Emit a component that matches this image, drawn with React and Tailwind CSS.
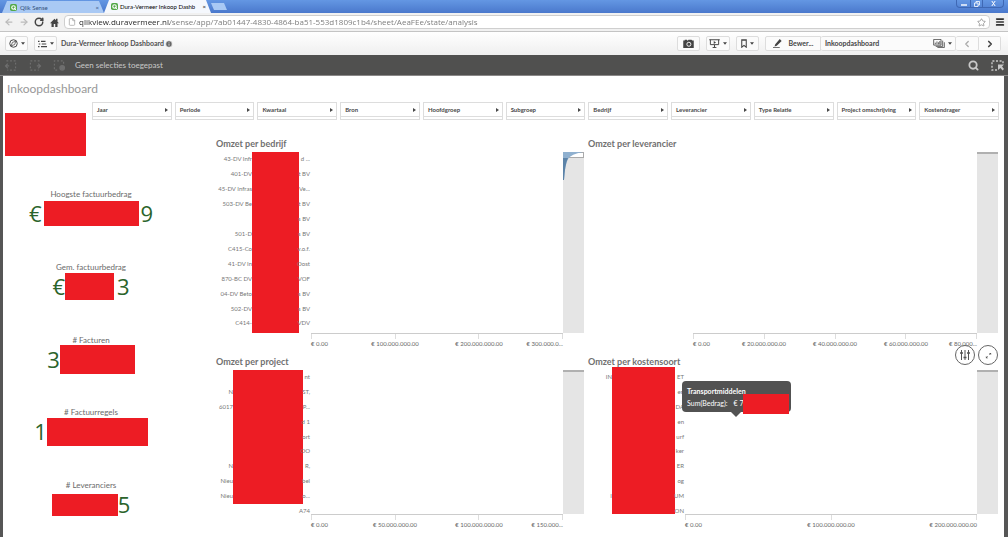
import { useState } from "react";
import { ArrowLeft, ArrowRight, RotateCw, Star, Menu, File, Search, ChevronLeft, ChevronRight, Info } from "lucide-react";

const FILTERS = [
  "Jaar", "Periode", "Kwartaal", "Bron", "Hoofdgroep", "Subgroep",
  "Bedrijf", "Leverancier", "Type Relatie", "Project omschrijving", "Kostendrager",
];

const KPIS = [
  { label: "Hoogste factuurbedrag", before: "€", after: "9", box: "w-[95px] h-[25px] mx-[2px]" },
  { label: "Gem. factuurbedrag", before: "€", after: "3", box: "w-[49px] h-[27px] mr-[3px]" },
  { label: "# Facturen", before: "3", after: "", box: "w-[75px] h-[29px]" },
  { label: "# Factuurregels", before: "1", after: "", box: "w-[101px] h-[28px]" },
  { label: "# Leveranciers", before: "", after: "5", box: "w-[66px] h-[22px]" },
];

const BEDRIJVEN = [
  ["43-DV Infr", "d ..."], ["401-DV", "t BV"], ["45-DV Infras", "Ve..."], ["503-DV Be", "t BV"],
  ["", "s BV"], ["501-D", "s BV"], ["C415-Co", "v.o.f."], ["41-DV In", "Oost"],
  ["870-BC DV", "VOF"], ["04-DV Beto", "s BV"], ["502-DV", "s BV"], ["C414-", "VDV"],
];

const PROJECTEN = [
  ["", "nt"], ["N", "ST,"], ["6017", "P..."], ["", "d 1"], ["", "ort"],
  ["", "OO"], ["N", "R,"], ["Nieu", "bel"], ["Nieu", "o..."], ["", "A74"],
];

const KOSTEN = [
  ["IN", "ET"], ["", "en"], ["", "DA"], ["", "en"], ["", "urf"],
  ["", "ker"], ["", "ER"], ["", "og"], ["I", "UM"], ["", "ON"],
];

function Caret() {
  return (
    <svg viewBox="0 0 6 4" className="w-[4px] h-[3px]" fill="#444">
      <path d="M0 0h6L3 4z" />
    </svg>
  );
}

function QlikLogo() {
  return (
    <svg viewBox="0 0 12 12" className="w-[7px] h-[7px] shrink-0">
      <rect width="12" height="12" rx="3" fill="#52a847" />
      <circle cx="6" cy="6" r="3" fill="none" stroke="#fff" strokeWidth="2" />
      <path d="M7 7l3 3" stroke="#fff" strokeWidth="2" />
    </svg>
  );
}

// ------------------------ BROWSER ------------------------
function TabStrip() {
  return (
    <div className="flex h-[13px] items-end bg-linear-to-b from-[#6497e3] to-[#4a78cc]">
      <div className="flex flex-1 items-end pl-[2px]">
        <button className="flex h-[12px] w-[102px] items-center gap-[3px] bg-[#a9c9f4] pl-[8px] pr-[5px] text-[6px] text-[#33507c] [clip-path:polygon(5px_0,97px_0,100%_100%,0_100%)]">
          <QlikLogo />
          <span className="flex-1 text-left">Qlik Sense</span>
          <span>×</span>
        </button>
        <button className="flex h-[13px] w-[107px] items-center gap-[2px] bg-[#f5f8fd] pl-[7px] pr-[5px] text-[6px] text-black [clip-path:polygon(5px_0,102px_0,100%_100%,0_100%)]">
          <QlikLogo />
          <span className="flex-1 text-left whitespace-nowrap">Dura-Vermeer Inkoop Dashb</span>
          <span>×</span>
        </button>
        <button aria-label="Nieuw tabblad" className="mb-[3px] h-[7px] w-[16px] bg-[#a9c9f4] [clip-path:polygon(0_0,13px_0,100%_100%,3px_100%)]" />
      </div>
      <div className="mr-[4px] flex h-[8px] self-start rounded-b-sm border border-t-0 border-[#3f68b4] text-white">
        <button aria-label="Minimaliseren" className="flex w-[14px] items-center justify-center border-r border-[#3f68b4]">
          <svg viewBox="0 0 6 6" className="w-[6px] h-[6px]"><path d="M0 4h6" stroke="currentColor" strokeWidth="1.4" /></svg>
        </button>
        <button aria-label="Herstellen" className="flex w-[12px] items-center justify-center border-r border-[#3f68b4]">
          <svg viewBox="0 0 6 6" className="w-[6px] h-[6px]" fill="none" stroke="currentColor" strokeWidth=".8"><path d="M2 2V.5h3.5V4H4M.5 2H4v3.5H.5z" /></svg>
        </button>
        <button aria-label="Sluiten" className="flex w-[20px] items-center justify-center">
          <svg viewBox="0 0 6 6" className="w-[5px] h-[5px]"><path d="M1 0l4 6M5 0L1 6" stroke="currentColor" strokeWidth="1.2" /></svg>
        </button>
      </div>
    </div>
  );
}

function AddressBar() {
  const [url, setUrl] = useState("qlikview.duravermeer.nl/sense/app/7ab01447-4830-4864-ba51-553d1809c1b4/sheet/AeaFEe/state/analysis");

  return (
    <div className="flex h-[19px] items-center border-b border-[#c4c4c4] bg-[#f1f1f1] pl-[4px] pr-[3px]">
      <div className="flex w-[60px] items-center gap-[5px] text-[#444]">
        <button aria-label="Terug"><ArrowLeft size={10} color="#bbb" strokeWidth={3} /></button>
        <button aria-label="Vooruit"><ArrowRight size={10} color="#bbb" strokeWidth={3} /></button>
        <button aria-label="Vernieuwen"><RotateCw size={10} strokeWidth={3.5} /></button>
        <button aria-label="Startpagina">
          <svg viewBox="0 0 12 12" className="ml-[1px] w-[9px] h-[9px]" fill="currentColor">
            <path d="M6 1L0 7h2v5h3V8h2v4h3V7h2L10 5V1H8v2z" />
          </svg>
        </button>
      </div>
      <div className="flex h-[14px] flex-1 items-center gap-[3px] rounded-sm border border-[#cfcfcf] bg-white px-[3px]">
        <File size={8} color="#999" />
        <input
          aria-label="Adres"
          className="h-[12px] flex-1 bg-[linear-gradient(90deg,#222_91px,#777_91px)] bg-clip-text font-['Open_Sans',sans-serif] text-[8px] text-transparent outline-none"
          value={url}
          onChange={e => setUrl(e.target.value)}
        />
        <button aria-label="Bladwijzer"><Star size={9} color="#888" /></button>
      </div>
      <button aria-label="Menu" className="ml-[5px]"><Menu size={10} color="#333" strokeWidth={4} /></button>
    </div>
  );
}

// ------------------------ QLIK TOOLBARS ------------------------
const toolButton = "flex h-[15px] items-center justify-center gap-[3px] rounded-xs border border-[#ddd] bg-[#fbfbfb] text-[#444]";

function AppToolbar() {
  return (
    <div className="flex h-[23px] items-center bg-linear-to-b from-white to-[#efefef] pl-[5px] pr-[7px] text-[7px] font-bold text-[#505050]">
      <button aria-label="Navigatie" className={`${toolButton} w-[23px]`}>
        <svg viewBox="0 0 12 12" className="w-[9px] h-[9px]" fill="none" stroke="currentColor">
          <circle cx="6" cy="6" r="5" strokeWidth="1.3" />
          <path d="M3 9l1.5-4.5L9 3 7.500 7.500z" />
        </svg>
        <Caret />
      </button>
      <button aria-label="Globaal menu" className={`${toolButton} ml-[6px] w-[23px]`}>
        <svg viewBox="0 0 12 10" className="w-[9px] h-[8px]" stroke="currentColor" strokeWidth="1.4">
          <path d="M0 1.500h2M4 1.500h6M1 5h2M5 5h6M0 8.500h2M4 8.500h8" />
        </svg>
        <Caret />
      </button>
      <h1 className="ml-[4px] whitespace-nowrap">Dura-Vermeer Inkoop Dashboard</h1>
      <button aria-label="Info" className="ml-[1px]"><Info size={8} color="#fff" fill="#666" /></button>

      <div className="ml-auto flex items-center gap-[6px]">
        <button aria-label="Momentopname" className={`${toolButton} w-[23px]`}>
          <svg viewBox="0 0 14 12" className="w-[11px] h-[9px]">
            <path d="M0 2h2V1h3v1h1l1-1h4l1 1h2v10H0z" fill="#444" />
            <circle cx="7.500" cy="7" r="2.700" fill="none" stroke="#fff" strokeWidth="1.200" />
          </svg>
        </button>
        <button aria-label="Verhalen" className={`${toolButton} w-[24px]`}>
          <svg viewBox="0 0 14 12" className="w-[11px] h-[9px]" fill="none" stroke="currentColor" strokeWidth="1.300">
            <path d="M0 1h14M1.500 1v6.500h11V1M7 8v3M4.500 11.300h5" />
            <path d="M6 2.500v4L9 4.500z" fill="currentColor" stroke="none" />
          </svg>
          <Caret />
        </button>
        <button aria-label="Bladwijzers" className={`${toolButton} w-[23px]`}>
          <svg viewBox="0 0 8 12" className="w-[6px] h-[9px]" fill="none" stroke="currentColor" strokeWidth="1.400">
            <path d="M1 1h6v10L4 8.500 1 11zM1 1.700h6" />
          </svg>
          <Caret />
        </button>
        <div className="flex">
          <button className={`${toolButton} w-[56px] rounded-r-none`}>
            <svg viewBox="0 0 12 12" className="mr-[4px] w-[9px] h-[9px]" fill="currentColor">
              <path d="M9 0l2.500 2.500L5 9 2 10l1-3zM0 11h9v1H0z" />
            </svg>
            Bewer...
          </button>
          <button className={`${toolButton} w-[135px] rounded-none border-l-0 pl-[4px] pr-[3px]`}>
            <span className="flex-1 text-left">Inkoopdashboard</span>
            <svg viewBox="0 0 14 11" className="w-[12px] h-[9px]" fill="none" stroke="currentColor">
              <path d="M.5.500h9v7h-9zM3 9h8.500V2M5 10.500h8.500V4M2.500 6.500v-2M4.500 6.500V3M6.500 6.500V4M8 6.500v-4" />
            </svg>
            <Caret />
          </button>
          <button aria-label="Vorig werkblad" className={`${toolButton} w-[23px] rounded-none border-l-0`}><ChevronLeft size={10} color="#aaa" strokeWidth={3} /></button>
          <button aria-label="Volgend werkblad" className={`${toolButton} w-[22px] rounded-l-none border-l-0`}><ChevronRight size={10} strokeWidth={4} /></button>
        </div>
      </div>
    </div>
  );
}

function SelectionBar() {
  return (
    <div className="flex h-[21px] items-center border-b border-[#8a8888] bg-[#50504f] pl-[4px] pr-[4px] text-[#c8c8c8]">
      <div className="flex w-[71px] gap-[10px] text-[#6e6e6e]">
        <button aria-label="Stap terug">
          <svg viewBox="0 0 14 12" className="w-[14px] h-[11px]" fill="none" stroke="currentColor" strokeWidth="1.300">
            <path d="M2 1h10M12 3v8H3" strokeDasharray="2 2" /><path d="M3.500 4L1 6.500 3.500 9M1 6.500h4" />
          </svg>
        </button>
        <button aria-label="Stap vooruit">
          <svg viewBox="0 0 14 12" className="w-[14px] h-[11px]" fill="none" stroke="currentColor" strokeWidth="1.300">
            <path d="M12 1H2v10h9" strokeDasharray="2 2" /><path d="M10.500 4L13 6.500 10.500 9M13 6.500H9" />
          </svg>
        </button>
        <button aria-label="Alle selecties wissen">
          <svg viewBox="0 0 14 12" className="w-[14px] h-[11px]" fill="none" stroke="currentColor" strokeWidth="1.300">
            <path d="M12 4V1H2v10h5" strokeDasharray="2 2" /><circle cx="10.500" cy="8.500" r="2.500" fill="currentColor" />
          </svg>
        </button>
      </div>
      <span className="flex-1 text-[8px]">Geen selecties toegepast</span>
      <button aria-label="Zoeken" className="mr-[12px]"><Search size={11} strokeWidth={4} /></button>
      <button aria-label="Selectiehulp">
        <svg viewBox="0 0 13 11" className="w-[13px] h-[11px]" fill="none" stroke="currentColor" strokeWidth="1.400">
          <path d="M6 10H1V1h11v3" strokeDasharray="2 1.600" />
          <path d="M7 4.500h6L11 6.500l2 2.500-1.500 1.500-2-2.500L7 10z" fill="currentColor" stroke="none" />
        </svg>
      </button>
    </div>
  );
}

// ------------------------ SHEET ------------------------
function Kpi({ kpi }) {
  return (
    <div className="flex flex-col items-center">
      <h3 className="text-[8px] leading-[10px] text-[#6a6a6a]">{kpi.label}</h3>
      <div className="flex h-[29px] items-center font-['Open_Sans',sans-serif] text-[22px] leading-[29px] text-[#2b642b]">
        {kpi.before}
        <span className={`${kpi.box} bg-[#ed1c24]`} />
        {kpi.after}
      </div>
    </div>
  );
}

function Labels({ rows, side, className }) {
  return (
    <ul className={`flex flex-col justify-around text-[6px] leading-[10px] text-[#777] ${className}`}>
      {rows.map((row, i) => (
        <li key={i} className="flex h-[10px] justify-end whitespace-nowrap">{row[side]}</li>
      ))}
    </ul>
  );
}

function Axis({ ticks, cols, labels }) {
  return (
    <div>
      <div className="flex border-t border-[#ccc]">
        {Array.from({ length: ticks }, (_, i) => (
          <span key={i} className="h-[5px] flex-1 border-l border-[#ddd] last:border-r" />
        ))}
      </div>
      <div className={`grid ${cols} text-[6px] leading-[10px] text-[#666]`}>
        {labels.map((label, i) => (
          <span
            key={label}
            className={`flex whitespace-nowrap ${i === 0 ? "justify-start" : i === labels.length - 1 ? "justify-end" : "justify-center"}`}
          >
            {label}
          </span>
        ))}
      </div>
    </div>
  );
}

function Chart({ title, height, labels, axis, active, children }) {
  return (
    <section className="relative">
      <h2 className="text-[9px] leading-[17px] font-bold text-[#707070]">{title}</h2>
      <div className="flex items-start">
        {labels}
        <div className="flex-1">
          <div className={height} />
          <Axis {...axis} />
        </div>
        <div className={`w-[21px] bg-[#e5e5e5] ${height}`}>
          {active ? (
            <svg viewBox="0 0 21 28" className="h-[28px] w-[21px]">
              <rect x=".5" y=".5" width="20" height="5" fill="#fff" stroke="#aaa" />
              <path d="M0 0h20Q8 2 5 7T1 28H0z" fill="#8fb0cf" />
              <path d="M0 6h5Q2 12 1 28H0z" fill="#5c83a8" />
            </svg>
          ) : (
            <div className="h-[2px] bg-[#b0b0b0]" />
          )}
        </div>
      </div>
      {children}
    </section>
  );
}

function Sheet() {
  return (
    <main className="border-l-[3px] border-r-[4px] border-[#565656] bg-white pr-[5px]">
      <h2 className="pl-[4px] text-[12px] leading-[26px] text-[#999]">Inkoopdashboard</h2>

      <div className="flex items-start gap-[6px] pl-[2px]">
        <div className="mt-[11px] -mb-[36px] h-[43px] w-[81px] bg-[#ed1c24]" />
        <div className="grid flex-1 grid-cols-11 gap-[3px]">
          {FILTERS.map(name => (
            <button key={name} className="h-[18px] border border-[#ddd] pb-[2px] text-[#484848]">
              <span className="flex h-[14px] items-center justify-between border-b border-[#ddd] pl-[4px] pr-[3px] text-[6px] font-bold whitespace-nowrap">
                {name}
                <svg viewBox="0 0 3 4" className="w-[3px] h-[4px]" fill="currentColor"><path d="M0 0l3 2-3 2z" /></svg>
              </span>
            </button>
          ))}
        </div>
      </div>

      <div className="flex">
        <div className="flex w-[176px] flex-col justify-between pt-[69px] pb-[18px]">
          {KPIS.map(kpi => <Kpi key={kpi.label} kpi={kpi} />)}
        </div>

        <div className="ml-[37px] grid flex-1 grid-cols-[368fr_410fr] gap-x-[4px] gap-y-[4px] pt-[15px] pr-[1px] pb-[7px]">
          <Chart
            title="Omzet per bedrijf"
            height="h-[181px]"
            active
            labels={
              <div className="flex w-[95px] items-start">
                <Labels rows={BEDRIJVEN} side={0} className="h-[179px] w-[36px]" />
                <div className="h-[181px] w-[47px] bg-[#ed1c24]" />
                <Labels rows={BEDRIJVEN} side={1} className="h-[179px] w-[11px]" />
              </div>
            }
            axis={{
              ticks: 3,
              cols: "grid-cols-[minmax(0,1fr)_minmax(0,2fr)_minmax(0,2fr)_minmax(0,1fr)]",
              labels: ["€ 0.00", "€ 100.000.000.00", "€ 200.000.000.00", "€ 300.000.0..."],
            }}
          />
          <Chart
            title="Omzet per leverancier"
            height="h-[181px]"
            labels={<div className="w-[105px]" />}
            axis={{
              ticks: 4,
              cols: "grid-cols-[minmax(0,1fr)_minmax(0,2fr)_minmax(0,2fr)_minmax(0,2fr)_minmax(0,1fr)]",
              labels: ["€ 0.00", "€ 20.000.000.00", "€ 40.000.000.00", "€ 60.000.000.00", "€ 80.000..."],
            }}
          />
          <Chart
            title="Omzet per project"
            height="h-[144px]"
            labels={
              <div className="flex w-[95px] items-start">
                <Labels rows={PROJECTEN} side={0} className="h-[148px] w-[17px]" />
                <div className="h-[134px] w-[70px] bg-[#ed1c24]" />
                <Labels rows={PROJECTEN} side={1} className="h-[148px] w-[7px]" />
              </div>
            }
            axis={{
              ticks: 3,
              cols: "grid-cols-[minmax(0,1fr)_minmax(0,2fr)_minmax(0,2fr)_minmax(0,1fr)]",
              labels: ["€ 0.00", "€ 50.000.000.00", "€ 100.000.000.00", "€ 150.000..."],
            }}
          />
          <Chart
            title="Omzet per kostensoort"
            height="h-[144px]"
            labels={
              <div className="flex w-[97px] items-start">
                <Labels rows={KOSTEN} side={0} className="h-[148px] w-[24px]" />
                <div className="-mt-[3px] h-[147px] w-[63px] bg-[#ed1c24]" />
                <Labels rows={KOSTEN} side={1} className="h-[148px] w-[9px]" />
              </div>
            }
            axis={{
              ticks: 2,
              cols: "grid-cols-[minmax(0,1fr)_minmax(0,2fr)_minmax(0,1fr)]",
              labels: ["€ 0.00", "€ 100.000.000.00", "€ 200.000.000.00"],
            }}
          >
            <div className="absolute -top-[8px] right-0 flex gap-[3px] text-[#555]">
              <button aria-label="Verkenning" className="flex h-[20px] w-[20px] items-center justify-center rounded-full border border-[#666] bg-white">
                <svg viewBox="0 0 10 10" className="w-[10px] h-[10px]" fill="none" stroke="currentColor">
                  <path d="M1.500 0v10M5 0v10M8.500 0v10" />
                  <path d="M0 3h3M3.500 7.500h3M7 3h3" strokeWidth="1.500" />
                </svg>
              </button>
              <button aria-label="Volledig scherm" className="flex h-[20px] w-[20px] items-center justify-center rounded-full border border-[#666] bg-white">
                <svg viewBox="0 0 8 8" className="w-[7px] h-[7px]" fill="currentColor">
                  <path d="M4.500 1H7v2.500zM1 4.500V7h2.500z" /><path d="M5 3l1.500-1.500M3 5L1.500 6.500" stroke="currentColor" />
                </svg>
              </button>
            </div>
            <div role="tooltip" className="absolute top-[28px] left-[94px] h-[31px] w-[109px] rounded-sm bg-[#525252] px-[5px] pt-[4px] text-[7px] leading-[12px] text-white">
              <strong className="block">Transportmiddelen</strong>
              <span className="flex gap-[6px] whitespace-nowrap"><span>Sum(Bedrag):</span><span>€ 7</span></span>
              <div className="absolute top-[13px] right-[2px] h-[20px] w-[46px] bg-[#ed1c24]" />
              <div className="absolute top-full left-[49px] h-[5px] w-[10px] bg-[#525252] [clip-path:polygon(0_0,100%_0,50%_100%)]" />
            </div>
          </Chart>
        </div>
      </div>
    </main>
  );
}

export default function App() {
  return (
    <div className="bg-white font-['Lato','Open_Sans',sans-serif]">
      <TabStrip />
      <AddressBar />
      <AppToolbar />
      <SelectionBar />
      <Sheet />
    </div>
  );
}
